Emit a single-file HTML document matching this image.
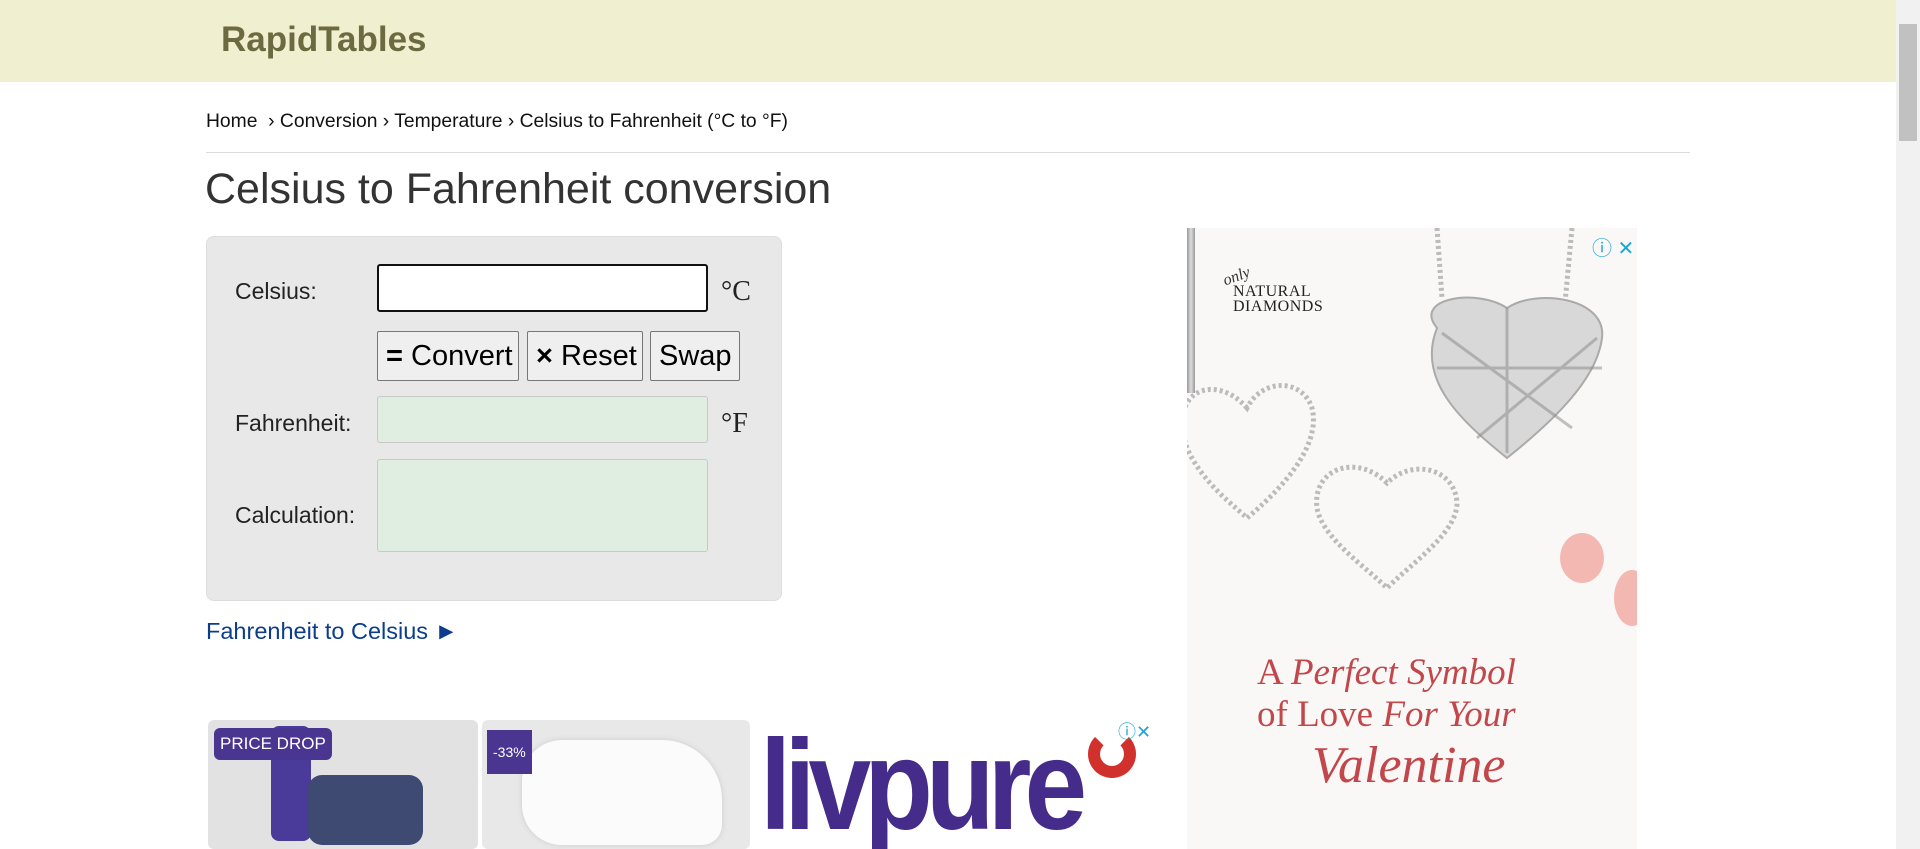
<!DOCTYPE html>
<html><head><meta charset="utf-8"><style>
*{margin:0;padding:0;box-sizing:border-box}
html,body{width:1920px;height:849px;overflow:hidden;background:#fff;font-family:"Liberation Sans",Arial,sans-serif;color:#222}
.hdr{position:absolute;left:0;top:0;width:1896px;height:82px;background:#f0efd0}
.logo{position:absolute;left:221px;top:20px;font-size:35px;font-weight:bold;color:#6b6a40}
.bc{position:absolute;left:206px;top:111px;font-size:19.3px;color:#111;white-space:nowrap}
.hr{position:absolute;left:206px;top:152px;width:1484px;height:1px;background:#ddd}
h1{position:absolute;left:205px;top:165px;font-size:43px;font-weight:normal;color:#333;white-space:nowrap}
.panel{position:absolute;left:206px;top:236px;width:576px;height:365px;background:#e8e8e8;border:1px solid #ddd;border-radius:8px}
.lbl{position:absolute;font-size:23px;color:#222}
.inp{position:absolute;left:377px;width:331px;border-radius:3px}
.unit{position:absolute;left:721px;font-family:"Liberation Serif",serif;font-size:28px;color:#222}
.btn{position:absolute;top:331px;height:50px;background:#efefef;border:1px solid #767676;border-radius:2px;font-size:29px;line-height:48px;padding-left:8px;color:#000;white-space:nowrap}
.link{position:absolute;left:206px;top:618px;font-size:23.5px;color:#0b3d8c}
.sb{position:absolute;left:1896px;top:0;width:24px;height:849px;background:#f1f1f1}
.th{position:absolute;left:1899px;top:24px;width:18px;height:117px;background:#c1c1c1}
.ad{position:absolute;left:1187px;top:228px;width:450px;height:621px;background:#faf8f7;overflow:hidden}
.tile{position:absolute;top:720px;height:129px;background:#e2e2e2;border-radius:6px;overflow:hidden}
</style></head><body>
<div class="hdr"><div class="logo">RapidTables</div></div>
<div class="bc">Home &nbsp;› Conversion › Temperature › Celsius to Fahrenheit (°C to °F)</div>
<div class="hr"></div>
<h1>Celsius to Fahrenheit conversion</h1>
<div class="panel"></div>
<div class="lbl" style="left:235px;top:278px">Celsius:</div>
<div class="inp" style="top:264px;height:48px;background:#fff;border:2px solid #111"></div>
<div class="unit" style="top:276px">°C</div>
<div class="btn" style="left:377px;width:142px"><b>=</b> Convert</div>
<div class="btn" style="left:527px;width:116px"><b>×</b> Reset</div>
<div class="btn" style="left:650px;width:90px">Swap</div>
<div class="lbl" style="left:235px;top:410px">Fahrenheit:</div>
<div class="inp" style="top:396px;height:47px;background:#dfeee0;border:1px solid #c8c8c8"></div>
<div class="unit" style="top:408px">°F</div>
<div class="lbl" style="left:235px;top:502px">Calculation:</div>
<div class="inp" style="top:459px;height:93px;background:#dfeee0;border:1px solid #c8c8c8"></div>
<div class="link">Fahrenheit to Celsius ►</div>

<div class="ad">
 <div style="position:absolute;left:0;top:0;width:8px;height:165px;background:linear-gradient(90deg,#999,#ddd,#999)"></div>
 <div style="position:absolute;left:36px;top:40px;font-family:'Liberation Serif',serif;font-style:italic;font-size:16px;color:#333;transform:rotate(-20deg)">only</div>
 <div style="position:absolute;left:46px;top:56px;font-family:'Liberation Serif',serif;font-size:16px;line-height:15px;color:#222;letter-spacing:0.5px">NATURAL<br>DIAMONDS</div>
 <svg width="450" height="621" style="position:absolute;left:0;top:0">
  <g fill="none" stroke="#bbb" stroke-width="5" stroke-dasharray="3 3">
   <path d="M250 0 L255 70 M385 0 L378 75"/>
   <path d="M60 180 C30 145 -20 160 0 220 C15 255 50 280 60 290 C90 265 135 220 125 180 C115 150 75 150 60 180Z"/>
   <path d="M200 255 C170 225 125 240 130 280 C135 310 180 340 200 360 C225 335 270 305 270 275 C268 240 225 230 200 255Z"/>
  </g>
  <path d="M250 100 C225 70 290 60 320 80 C350 60 420 70 415 110 C410 150 370 190 320 230 C270 190 230 150 250 100Z" fill="#d8d8d8" stroke="#aaa" stroke-width="2"/>
  <path d="M255 105 L385 200 M410 110 L290 210 M320 80 L320 225 M250 140 L415 140" stroke="#888" stroke-width="3" opacity=".5"/>
  <ellipse cx="395" cy="330" rx="22" ry="25" fill="#f3a7a0" opacity=".8"/>
  <ellipse cx="445" cy="370" rx="18" ry="28" fill="#f3a7a0" opacity=".8"/>
 </svg>
 <div style="position:absolute;left:70px;top:424px;font-family:'Liberation Serif',serif;font-size:37px;line-height:42px;color:#c2474b;white-space:nowrap">A <i>Perfect Symbol</i><br>of Love <i>For Your</i></div>
 <div style="position:absolute;left:125px;top:508px;font-family:'Liberation Serif',serif;font-style:italic;font-size:52px;color:#c2474b">Valentine</div>
 <div style="position:absolute;left:405px;top:4px;font-size:20px;color:#19a7d5">ⓘ ✕</div>
</div>

<div class="tile" style="left:208px;width:270px">
 <div style="position:absolute;left:63px;top:6px;width:40px;height:115px;background:#4a3b9a;border-radius:8px"></div>
 <div style="position:absolute;left:100px;top:55px;width:115px;height:70px;background:#3e4a72;border-radius:14px"></div>
 <div style="position:absolute;left:6px;top:8px;background:#4a3591;color:#fff;font-size:17px;padding:6px 6px;border-radius:6px">PRICE DROP</div>
</div>
<div class="tile" style="left:482px;width:268px;background:#e8e8e8">
 <div style="position:absolute;left:40px;top:20px;width:200px;height:105px;background:#fbfbfb;border-radius:40px 60px 20px 40px;box-shadow:0 0 6px #ccc"></div>
 <div style="position:absolute;left:5px;top:10px;background:#4a3591;color:#fff;font-size:14px;padding:14px 6px">-33%</div>
</div>
<div style="position:absolute;left:758px;top:720px;width:404px;height:129px;background:#fff;overflow:hidden">
 <div style="position:absolute;left:2px;top:-8px;font-size:128px;font-weight:bold;color:#452c8a;letter-spacing:-8px;transform:scaleX(.88);transform-origin:left">livpure</div>
 <div style="position:absolute;left:330px;top:10px;width:48px;height:48px;border-radius:50%;border:12px solid #d0312d;border-top-color:transparent"></div>
 <div style="position:absolute;left:360px;top:-2px;font-size:18px;color:#19a7d5">ⓘ✕</div>
</div>
<div class="sb"></div><div class="th"></div>
</body></html>
